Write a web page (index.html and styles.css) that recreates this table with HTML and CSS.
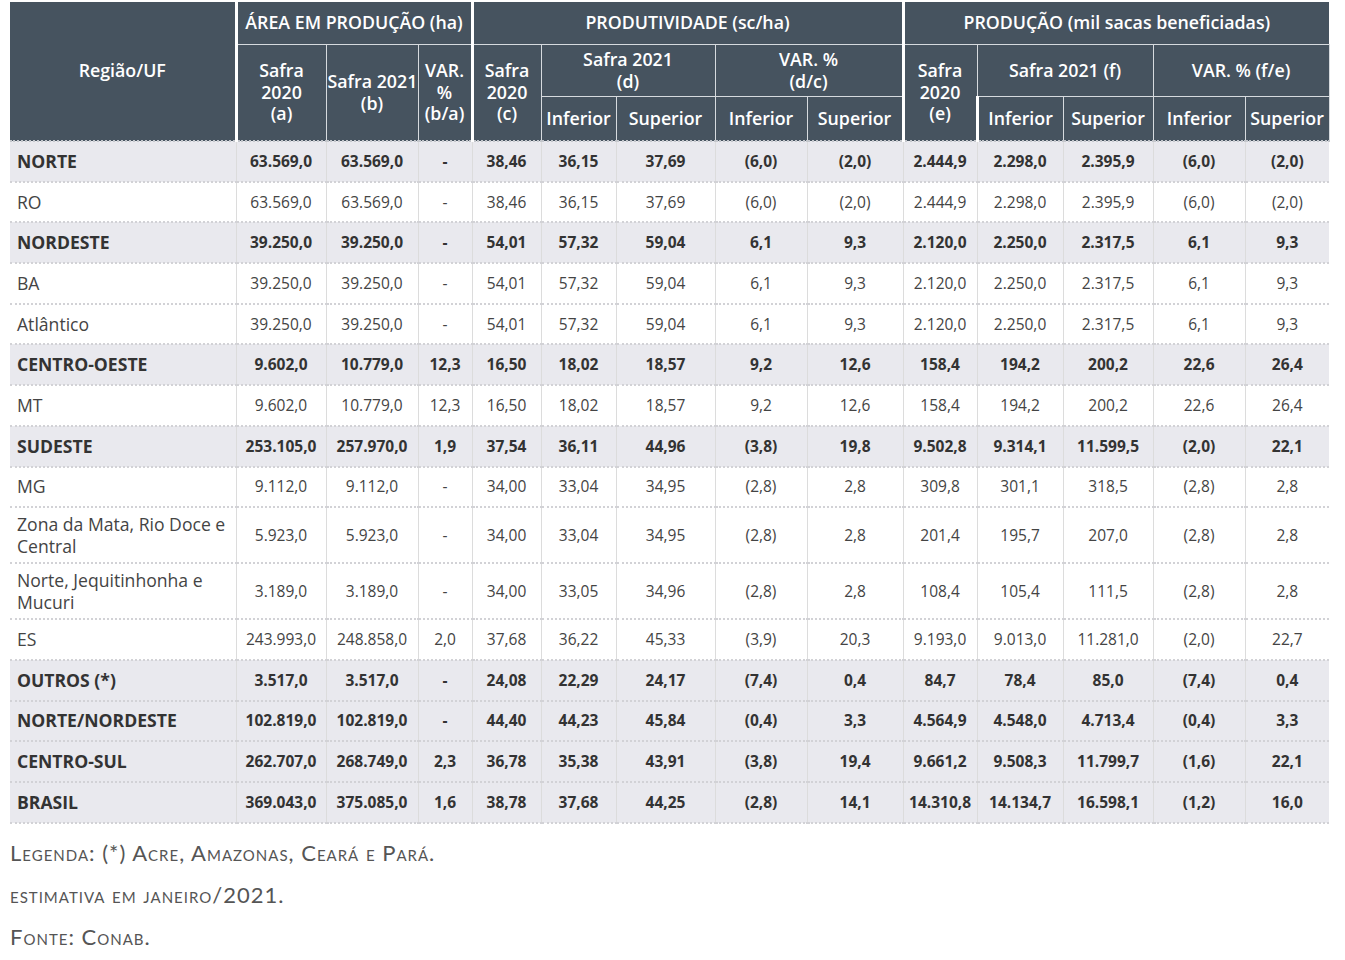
FILE: index.html
```html
<!DOCTYPE html>
<html lang="pt-BR">
<head>
<meta charset="utf-8">
<title>Tabela</title>
<link rel="stylesheet" href="styles.css">
</head>
<body>
<div class="page">
<table class="tbl">
<colgroup>
<col style="width:226px"><col style="width:90px"><col style="width:92px"><col style="width:54px">
<col style="width:69px"><col style="width:75px"><col style="width:99px"><col style="width:92px"><col style="width:96px">
<col style="width:74px"><col style="width:86px"><col style="width:90px"><col style="width:92px"><col style="width:84px">
</colgroup>
<thead>
<tr class="h1">
<th rowspan="3">Região/UF</th>
<th colspan="3" class="sep">ÁREA EM PRODUÇÃO (ha)</th>
<th colspan="5" class="sep">PRODUTIVIDADE (sc/ha)</th>
<th colspan="5" class="sep">PRODUÇÃO (mil sacas beneficiadas)</th>
</tr>
<tr class="h2">
<th rowspan="2" class="sep">Safra<br>2020<br>(a)</th>
<th rowspan="2">Safra 2021<br>(b)</th>
<th rowspan="2">VAR.<br>%<br>(b/a)</th>
<th rowspan="2" class="sep">Safra<br>2020<br>(c)</th>
<th colspan="2">Safra 2021<br>(d)</th>
<th colspan="2">VAR. %<br>(d/c)</th>
<th rowspan="2" class="sep">Safra<br>2020<br>(e)</th>
<th colspan="2">Safra 2021 (f)</th>
<th colspan="2">VAR. % (f/e)</th>
</tr>
<tr class="h3">
<th>Inferior</th><th>Superior</th><th>Inferior</th><th>Superior</th>
<th class="sep">Inferior</th><th>Superior</th><th>Inferior</th><th>Superior</th>
</tr>
</thead>
<tbody>
<tr class="g"><td>NORTE</td><td>63.569,0</td><td>63.569,0</td><td>-</td><td>38,46</td><td>36,15</td><td>37,69</td><td>(6,0)</td><td>(2,0)</td><td>2.444,9</td><td>2.298,0</td><td>2.395,9</td><td>(6,0)</td><td>(2,0)</td></tr>
<tr><td>RO</td><td>63.569,0</td><td>63.569,0</td><td>-</td><td>38,46</td><td>36,15</td><td>37,69</td><td>(6,0)</td><td>(2,0)</td><td>2.444,9</td><td>2.298,0</td><td>2.395,9</td><td>(6,0)</td><td>(2,0)</td></tr>
<tr class="g"><td>NORDESTE</td><td>39.250,0</td><td>39.250,0</td><td>-</td><td>54,01</td><td>57,32</td><td>59,04</td><td>6,1</td><td>9,3</td><td>2.120,0</td><td>2.250,0</td><td>2.317,5</td><td>6,1</td><td>9,3</td></tr>
<tr><td>BA</td><td>39.250,0</td><td>39.250,0</td><td>-</td><td>54,01</td><td>57,32</td><td>59,04</td><td>6,1</td><td>9,3</td><td>2.120,0</td><td>2.250,0</td><td>2.317,5</td><td>6,1</td><td>9,3</td></tr>
<tr><td>Atlântico</td><td>39.250,0</td><td>39.250,0</td><td>-</td><td>54,01</td><td>57,32</td><td>59,04</td><td>6,1</td><td>9,3</td><td>2.120,0</td><td>2.250,0</td><td>2.317,5</td><td>6,1</td><td>9,3</td></tr>
<tr class="g"><td>CENTRO-OESTE</td><td>9.602,0</td><td>10.779,0</td><td>12,3</td><td>16,50</td><td>18,02</td><td>18,57</td><td>9,2</td><td>12,6</td><td>158,4</td><td>194,2</td><td>200,2</td><td>22,6</td><td>26,4</td></tr>
<tr><td>MT</td><td>9.602,0</td><td>10.779,0</td><td>12,3</td><td>16,50</td><td>18,02</td><td>18,57</td><td>9,2</td><td>12,6</td><td>158,4</td><td>194,2</td><td>200,2</td><td>22,6</td><td>26,4</td></tr>
<tr class="g"><td>SUDESTE</td><td>253.105,0</td><td>257.970,0</td><td>1,9</td><td>37,54</td><td>36,11</td><td>44,96</td><td>(3,8)</td><td>19,8</td><td>9.502,8</td><td>9.314,1</td><td>11.599,5</td><td>(2,0)</td><td>22,1</td></tr>
<tr><td>MG</td><td>9.112,0</td><td>9.112,0</td><td>-</td><td>34,00</td><td>33,04</td><td>34,95</td><td>(2,8)</td><td>2,8</td><td>309,8</td><td>301,1</td><td>318,5</td><td>(2,8)</td><td>2,8</td></tr>
<tr class="tall"><td>Zona da Mata, Rio Doce e Central</td><td>5.923,0</td><td>5.923,0</td><td>-</td><td>34,00</td><td>33,04</td><td>34,95</td><td>(2,8)</td><td>2,8</td><td>201,4</td><td>195,7</td><td>207,0</td><td>(2,8)</td><td>2,8</td></tr>
<tr class="tall"><td>Norte, Jequitinhonha e Mucuri</td><td>3.189,0</td><td>3.189,0</td><td>-</td><td>34,00</td><td>33,05</td><td>34,96</td><td>(2,8)</td><td>2,8</td><td>108,4</td><td>105,4</td><td>111,5</td><td>(2,8)</td><td>2,8</td></tr>
<tr><td>ES</td><td>243.993,0</td><td>248.858,0</td><td>2,0</td><td>37,68</td><td>36,22</td><td>45,33</td><td>(3,9)</td><td>20,3</td><td>9.193,0</td><td>9.013,0</td><td>11.281,0</td><td>(2,0)</td><td>22,7</td></tr>
<tr class="g"><td>OUTROS (*)</td><td>3.517,0</td><td>3.517,0</td><td>-</td><td>24,08</td><td>22,29</td><td>24,17</td><td>(7,4)</td><td>0,4</td><td>84,7</td><td>78,4</td><td>85,0</td><td>(7,4)</td><td>0,4</td></tr>
<tr class="g"><td>NORTE/NORDESTE</td><td>102.819,0</td><td>102.819,0</td><td>-</td><td>44,40</td><td>44,23</td><td>45,84</td><td>(0,4)</td><td>3,3</td><td>4.564,9</td><td>4.548,0</td><td>4.713,4</td><td>(0,4)</td><td>3,3</td></tr>
<tr class="g"><td>CENTRO-SUL</td><td>262.707,0</td><td>268.749,0</td><td>2,3</td><td>36,78</td><td>35,38</td><td>43,91</td><td>(3,8)</td><td>19,4</td><td>9.661,2</td><td>9.508,3</td><td>11.799,7</td><td>(1,6)</td><td>22,1</td></tr>
<tr class="g"><td>BRASIL</td><td>369.043,0</td><td>375.085,0</td><td>1,6</td><td>38,78</td><td>37,68</td><td>44,25</td><td>(2,8)</td><td>14,1</td><td>14.310,8</td><td>14.134,7</td><td>16.598,1</td><td>(1,2)</td><td>16,0</td></tr>
</tbody>
</table>
<div class="notes">
<p>Legenda: (*) Acre, Amazonas, Ceará e Pará.</p>
<p>estimativa em janeiro/2021.</p>
<p>Fonte: Conab.</p>
</div>
</div>
</body>
</html>
```

FILE: styles.css
```css
html, body {
  margin: 0;
  padding: 0;
  background: #fff;
}
.page {
  padding: 2px 0 0 10px;
  font-family: "Open Sans", "DejaVu Sans", sans-serif;
}
.tbl {
  table-layout: fixed;
  width: 1319px;
  border-collapse: collapse;
  border-spacing: 0;
}
.tbl th {
  background: #46535f;
  color: #fff;
  font-weight: 600;
  font-size: 17.8px;
  line-height: 21.5px;
  padding: 0 1px;
  text-align: center;
  vertical-align: middle;
  border: 1px solid #d6dade;
  white-space: nowrap;
}
.tbl thead tr:first-child th { border-top: none; }
.tbl thead tr:first-child th:first-child { border-left: none; }
.tbl .h1 th { height: 42px; }
.tbl .h2 th { height: 51px; }
.tbl .h3 th { height: 43px; border-bottom: 2px dotted #c4c7cc; }
.tbl th[rowspan="2"], .tbl th[rowspan="3"] { border-bottom: 2px dotted #c4c7cc; }
.tbl th.sep { border-left: 3px solid #fff; }
.tbl thead tr:first-child th:last-child { border-right: none; }

.tbl td {
  font-size: 15.5px;
  color: #444;
  text-align: center;
  vertical-align: middle;
  padding: 0 4px;
  height: 38.7px;
  line-height: 21px;
  border-left: 1px solid #dcdcdc;
  border-right: 1px solid #dcdcdc;
  border-bottom: 2px dotted #d2d2d6;
  white-space: nowrap;
}
.tbl td:first-child {
  text-align: left;
  padding-left: 7px;
  padding-right: 2px;
  border-left: none;
  white-space: normal;
  font-size: 17.6px;
}
.tbl td:last-child { border-right: none; }
.tbl tr.tall td { height: 54px; line-height: 22px; }
.tbl tr.g td {
  background: #e9e9ee;
  font-weight: 700;
  color: #333;
}

.notes {
  padding-top: 8px;
  font-family: "Lato", "Open Sans", sans-serif;
  font-variant: small-caps;
  font-size: 22px;
  letter-spacing: 1px;
  color: #555;
}
.notes p {
  margin: 0;
  line-height: 42px;
}
```
